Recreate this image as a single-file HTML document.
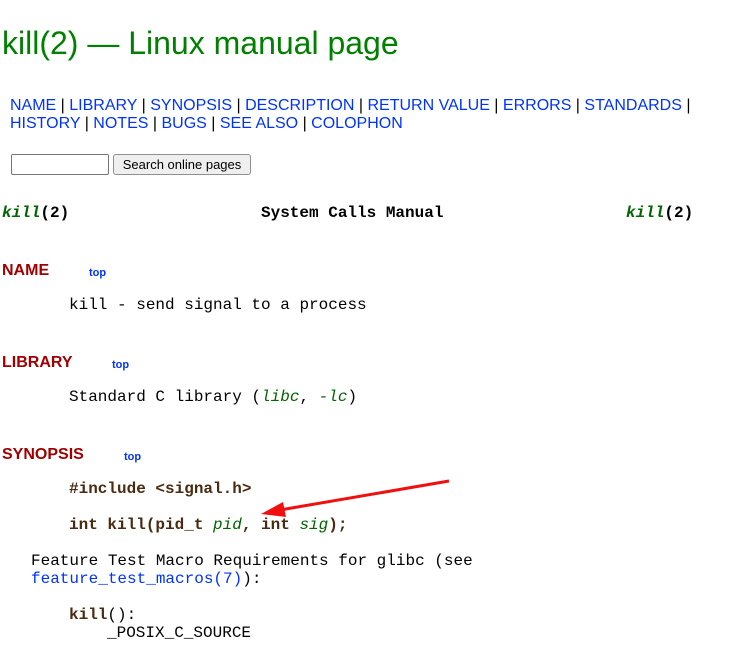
<!DOCTYPE html>
<html><head><meta charset="utf-8"><style>
body{margin:0;background:#fff;width:738px;height:662px;overflow:hidden;position:relative;font-family:"Liberation Sans",sans-serif}
.a{position:absolute;white-space:pre;line-height:18px}
.m{font-family:"Liberation Mono",monospace;font-size:16px;color:#000}
h1{position:absolute;left:2px;top:23px;margin:0;font-weight:normal;font-size:32px;color:#008000;line-height:40px}
.nav{font-size:16px;color:#000}
.nav a,a{color:#0033ff;text-decoration:none}
.h{font-weight:bold;font-size:16px;color:#a00000}
.t{font-weight:bold;font-size:11px;color:#0033ff}
.b{font-weight:bold;color:#4a2a10}
.g{font-style:italic;color:#006400}
</style></head><body>
<h1>kill(2) — Linux manual page</h1>
<div class="a nav" style="left:10px;top:97px"><a>NAME</a> | <a>LIBRARY</a> | <a>SYNOPSIS</a> | <a>DESCRIPTION</a> | <a>RETURN VALUE</a> | <a>ERRORS</a> | <a>STANDARDS</a> |</div>
<div class="a nav" style="left:10px;top:115px"><a>HISTORY</a> | <a>NOTES</a> | <a>BUGS</a> | <a>SEE ALSO</a> | <a>COLOPHON</a></div>
<div style="position:absolute;left:11px;top:154px;width:96px;height:19px;border:1px solid #767676;border-radius:2px"></div>
<div style="position:absolute;left:113px;top:154px;width:136px;height:19px;border:1px solid #8f8f8f;border-radius:3px;background:#efefef;font-size:13px;line-height:20px;text-align:center">Search online pages</div>
<div class="a m" style="left:2px;top:204px;font-weight:bold"><span class="g" style="font-weight:bold">kill</span>(2)</div>
<div class="a m" style="left:261px;top:204px;font-weight:bold">System Calls Manual</div>
<div class="a m" style="left:626px;top:204px;font-weight:bold"><span class="g" style="font-weight:bold">kill</span>(2)</div>
<div class="a h" style="left:2px;top:262px">NAME</div><div class="a t" style="left:89px;top:264px">top</div>
<div class="a m" style="left:69px;top:296px">kill - send signal to a process</div>
<div class="a h" style="left:2px;top:354px">LIBRARY</div><div class="a t" style="left:112px;top:356px">top</div>
<div class="a m" style="left:69px;top:388px">Standard C library (<span class="g">libc</span>, <span class="g">-lc</span>)</div>
<div class="a h" style="left:2px;top:446px">SYNOPSIS</div><div class="a t" style="left:124px;top:448px">top</div>
<div class="a m b" style="left:69px;top:480px">#include &lt;signal.h&gt;</div>
<div class="a m b" style="left:69px;top:516px">int kill(pid_t <span class="g" style="font-weight:normal">pid</span>, int <span class="g" style="font-weight:normal">sig</span>);</div>
<div class="a m" style="left:31px;top:552px">Feature Test Macro Requirements for glibc (see</div>
<div class="a m" style="left:31px;top:570px"><a>feature_test_macros(7)</a>):</div>
<div class="a m" style="left:69px;top:606px"><span class="b">kill</span>():</div>
<div class="a m" style="left:107px;top:624px">_POSIX_C_SOURCE</div>
<svg style="position:absolute;left:0;top:0" width="738" height="662"><line x1="449" y1="481" x2="280" y2="510" stroke="#f01010" stroke-width="3"/><polygon points="261,514 283,502 286,517" fill="#f01010"/></svg>
</body></html>
